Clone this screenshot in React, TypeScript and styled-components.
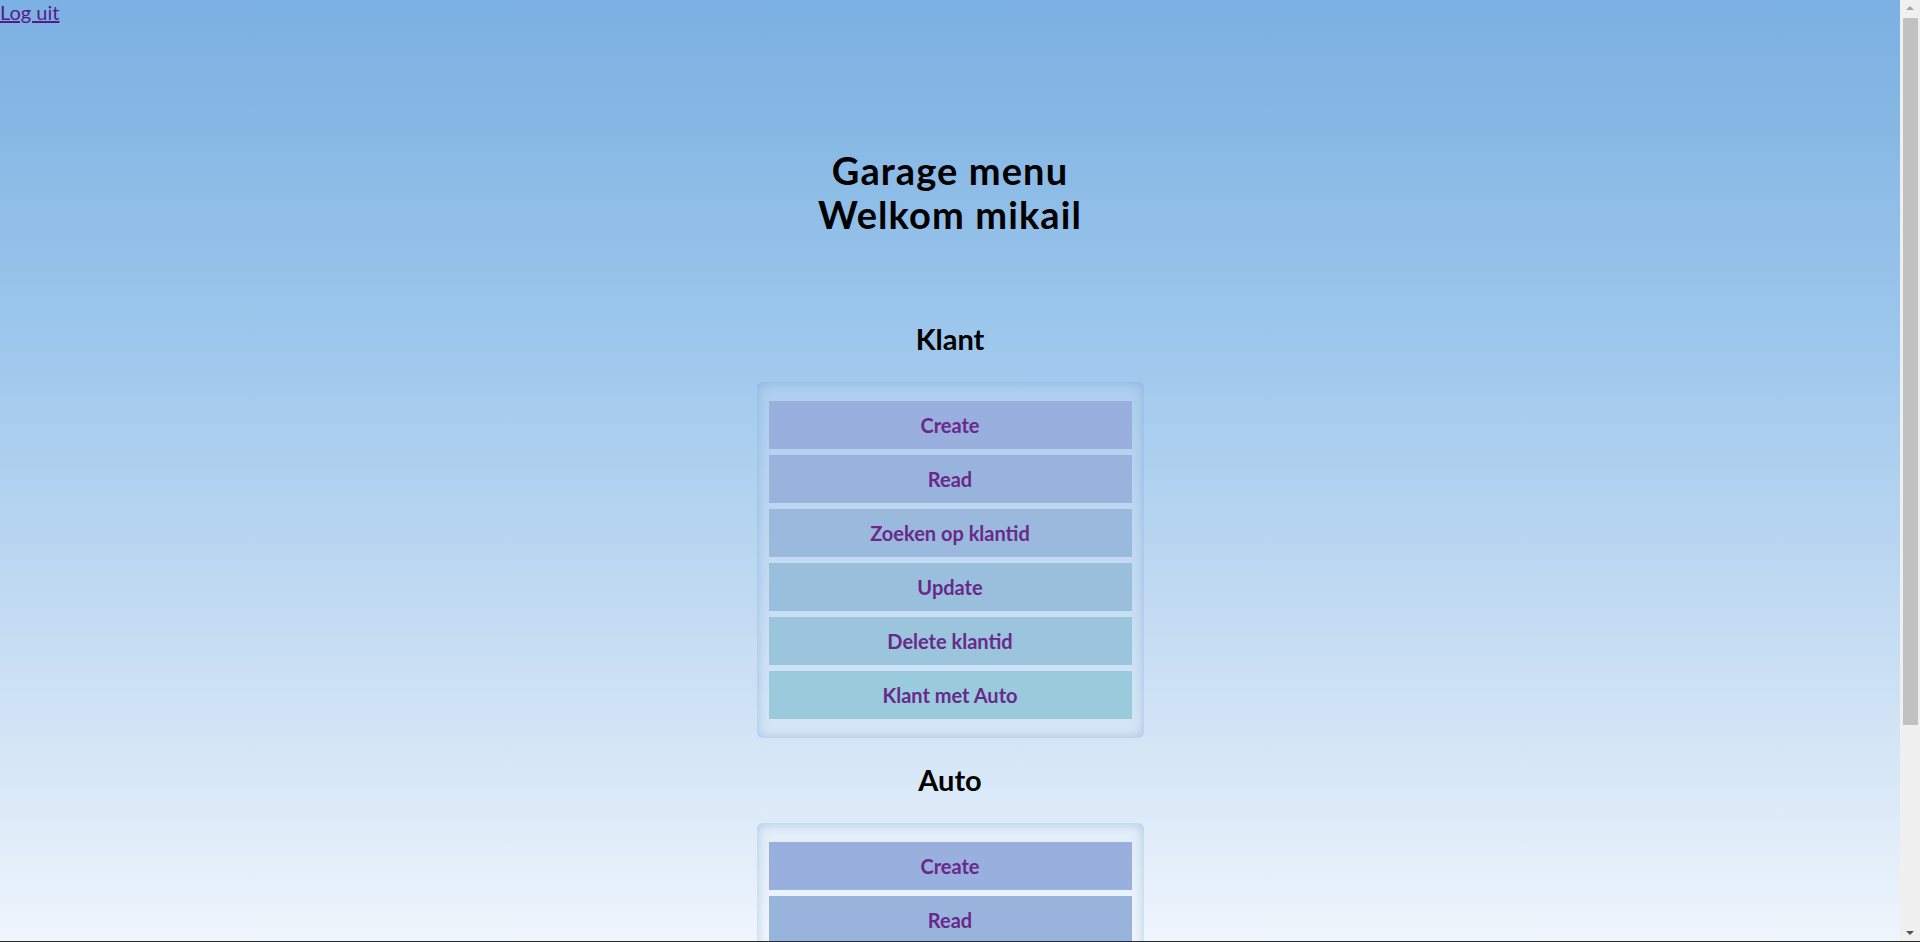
import React from "react";
import styled, { createGlobalStyle } from "styled-components";

const GlobalStyle = createGlobalStyle`
  html, body {
    margin: 0;
    padding: 0;
    height: 100%;
    overflow: hidden;
  }
  body {
    font-family: Lato, "Open Sans", "Liberation Sans", sans-serif;
  }
`;

const Shell = styled.div`
  display: flex;
  height: 100vh;
  background: linear-gradient(
    to bottom,
    #7bb0e2 0%,
    #88b9e5 15%,
    #9cc6ec 35%,
    #b5d4f0 55%,
    #cfe2f5 75%,
    #eef5fc 100%
  );
  border-bottom: 1px solid #2a2a2a;
  box-sizing: border-box;
`;

const Viewport = styled.div`
  flex: 1;
  min-width: 0;
  overflow-y: auto;
  scrollbar-width: none;
  &::-webkit-scrollbar {
    display: none;
  }
`;

const Page = styled.div`
  display: flex;
  flex-direction: column;
  padding-bottom: 31px;
`;

const TopBar = styled.nav`
  display: flex;
  height: 24px;
  align-items: flex-start;
`;

const LogoutLink = styled.a`
  font-family: Lato, "Open Sans", sans-serif;
  font-size: 20px;
  line-height: 1.2;
  color: #551a8b;
  text-decoration: underline;
  cursor: pointer;
`;

const Main = styled.main`
  display: flex;
  flex-direction: column;
  align-items: center;
`;

const Title = styled.h1`
  margin: 124px 0 0;
  font-size: 38px;
  font-weight: 700;
  letter-spacing: 1.1px;
  line-height: 44px;
  text-align: center;
  color: #000;
`;

const Section = styled.section<{ $first?: boolean }>`
  display: flex;
  flex-direction: column;
  align-items: center;
  margin-top: ${(p) => (p.$first ? "86px" : "25px")};
`;

const SectionTitle = styled.h2`
  margin: 0 0 25px;
  font-size: 29px;
  font-weight: 700;
  line-height: 1.2;
  color: #000;
`;

const MenuBox = styled.div`
  box-sizing: border-box;
  width: 387px;
  padding: 19px 12px;
  display: flex;
  flex-direction: column;
  gap: 6px;
  border-radius: 6px;
  background: rgba(255, 255, 255, 0.1);
  box-shadow: inset 0 0 12px rgba(70, 120, 190, 0.35);
`;

const MenuButton = styled.a<{ $bg: string }>`
  display: flex;
  align-items: center;
  justify-content: center;
  height: 48px;
  background: ${(p) => p.$bg};
  color: #69298b;
  font-size: 20px;
  font-weight: 700;
  text-decoration: none;
  cursor: pointer;
`;

/* Window scrollbar, drawn */
const Rail = styled.div`
  width: 20px;
  flex: none;
  display: flex;
  flex-direction: column;
  background: #f0f0f0;
`;

const RailArrow = styled.div<{ $dir: "up" | "down" }>`
  height: 17px;
  flex: none;
  display: flex;
  justify-content: center;
  align-items: ${(p) => (p.$dir === "up" ? "flex-start" : "flex-end")};
  padding: ${(p) => (p.$dir === "up" ? "6px 0 0" : "0 0 6px")};
  box-sizing: border-box;
  &::before {
    content: "";
    width: 0;
    height: 0;
    border-left: 4px solid transparent;
    border-right: 4px solid transparent;
    ${(p) =>
      p.$dir === "up"
        ? "border-bottom: 4px solid #a3a3a3;"
        : "border-top: 4px solid #505050;"}
  }
`;

const RailTrack = styled.div`
  flex: 1;
  padding: 1px 2px 0 3px;
`;

const RailThumb = styled.div`
  height: 707px;
  background: #c1c1c1;
`;

const tones = ["#99afdd", "#99b4dc", "#9ab9dc", "#9abfdc", "#9ac5dc", "#9acbdc"];

const sections = [
  {
    title: "Klant",
    items: ["Create", "Read", "Zoeken op klantid", "Update", "Delete klantid", "Klant met Auto"],
  },
  {
    title: "Auto",
    items: ["Create", "Read", "Zoeken op kenteken", "Update", "Delete kenteken", "Auto met Klant"],
  },
];

export default function App() {
  return (
    <>
      <GlobalStyle />
      <Shell>
        <Viewport>
          <Page>
            <TopBar>
              <LogoutLink href="#">Log uit</LogoutLink>
            </TopBar>
            <Main>
              <Title>
                Garage menu
                <br />
                Welkom mikail
              </Title>
              {sections.map((s, si) => (
                <Section key={s.title} $first={si === 0}>
                  <SectionTitle>{s.title}</SectionTitle>
                  <MenuBox>
                    {s.items.map((item, i) => (
                      <MenuButton key={item} href="#" $bg={tones[i % tones.length]}>
                        {item}
                      </MenuButton>
                    ))}
                  </MenuBox>
                </Section>
              ))}
            </Main>
          </Page>
        </Viewport>
        <Rail>
          <RailArrow $dir="up" />
          <RailTrack>
            <RailThumb />
          </RailTrack>
          <RailArrow $dir="down" />
        </Rail>
      </Shell>
    </>
  );
}
